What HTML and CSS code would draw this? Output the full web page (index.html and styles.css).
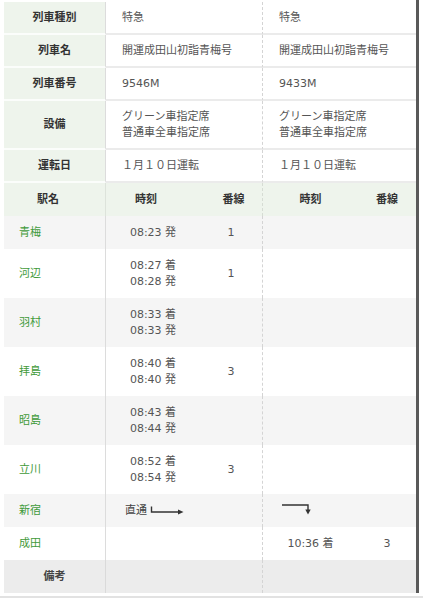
FILE: index.html
```html
<!DOCTYPE html>
<html lang="ja">
<head>
<meta charset="utf-8">
<title>列車時刻</title>
<link rel="stylesheet" href="styles.css">
</head>
<body>
<div class="page">
  <div class="frame">
    <div class="row info first">
      <div class="cell lab">列車種別</div>
      <div class="cell val v1">特急</div>
      <div class="cell val">特急</div>
    </div>
    <div class="row info">
      <div class="cell lab">列車名</div>
      <div class="cell val v1">開運成田山初詣青梅号</div>
      <div class="cell val">開運成田山初詣青梅号</div>
    </div>
    <div class="row info">
      <div class="cell lab">列車番号</div>
      <div class="cell val v1">9546M</div>
      <div class="cell val">9433M</div>
    </div>
    <div class="row info tall">
      <div class="cell lab">設備</div>
      <div class="cell val v1"><div>グリーン車指定席<br>普通車全車指定席</div></div>
      <div class="cell val"><div>グリーン車指定席<br>普通車全車指定席</div></div>
    </div>
    <div class="row info">
      <div class="cell lab">運転日</div>
      <div class="cell val v1">１月１０日運転</div>
      <div class="cell val">１月１０日運転</div>
    </div>

    <div class="row head">
      <div class="cell hname">駅名</div>
      <div class="cell hc ht1">時刻</div>
      <div class="cell hc hp1">番線</div>
      <div class="cell hc">時刻</div>
      <div class="cell hc">番線</div>
    </div>

    <div class="row st alt">
      <div class="cell sname">青梅</div>
      <div class="cell tm">08:23 発</div>
      <div class="cell pl p1">1</div>
      <div class="cell tm"></div>
      <div class="cell pl"></div>
    </div>
    <div class="row st tall">
      <div class="cell sname">河辺</div>
      <div class="cell tm"><div>08:27 着<br>08:28 発</div></div>
      <div class="cell pl p1">1</div>
      <div class="cell tm"></div>
      <div class="cell pl"></div>
    </div>
    <div class="row st tall alt">
      <div class="cell sname">羽村</div>
      <div class="cell tm"><div>08:33 着<br>08:33 発</div></div>
      <div class="cell pl p1"></div>
      <div class="cell tm"></div>
      <div class="cell pl"></div>
    </div>
    <div class="row st tall">
      <div class="cell sname">拝島</div>
      <div class="cell tm"><div>08:40 着<br>08:40 発</div></div>
      <div class="cell pl p1">3</div>
      <div class="cell tm"></div>
      <div class="cell pl"></div>
    </div>
    <div class="row st tall alt">
      <div class="cell sname">昭島</div>
      <div class="cell tm"><div>08:43 着<br>08:44 発</div></div>
      <div class="cell pl p1"></div>
      <div class="cell tm"></div>
      <div class="cell pl"></div>
    </div>
    <div class="row st tall">
      <div class="cell sname">立川</div>
      <div class="cell tm"><div>08:52 着<br>08:54 発</div></div>
      <div class="cell pl p1">3</div>
      <div class="cell tm"></div>
      <div class="cell pl"></div>
    </div>
    <div class="row st alt">
      <div class="cell sname">新宿</div>
      <div class="cell tm thru">直通<svg class="arr-r" width="34" height="10" viewBox="0 0 34 10"><path d="M1.5 1.5 V7 H29" fill="none" stroke="#333" stroke-width="1.4"/><polygon points="28,4.5 33.5,7 28,9.5" fill="#333"/></svg></div>
      <div class="cell pl p1"></div>
      <div class="cell tm thru2"><svg class="arr-d" width="30" height="12" viewBox="0 0 30 12"><path d="M0 2 H26 V7.5" fill="none" stroke="#333" stroke-width="1.4"/><polygon points="23.3,6.5 28.7,6.5 26,11.5" fill="#333"/></svg></div>
      <div class="cell pl"></div>
    </div>
    <div class="row st">
      <div class="cell sname">成田</div>
      <div class="cell tm"></div>
      <div class="cell pl p1"></div>
      <div class="cell tm">10:36 着</div>
      <div class="cell pl">3</div>
    </div>
    <div class="row note">
      <div class="cell nlab">備考</div>
      <div class="cell val v1"></div>
      <div class="cell val"></div>
    </div>
  </div>
</div>
<div class="foot"></div>
</body>
</html>
```

FILE: styles.css
```css
* {
  box-sizing: border-box;
  margin: 0;
  padding: 0;
}

html, body {
  background: #ffffff;
}

body {
  font-family: "DejaVu Sans", "Noto Sans CJK JP", sans-serif;
  font-size: 11px;
  line-height: 16px;
  color: #555555;
  width: 423px;
  height: 600px;
  overflow: hidden;
}

.page {
  padding-left: 4px;
}

.frame {
  width: 415px;
  border-right: 3px solid #595959;
}

.row {
  display: grid;
  grid-template-columns: 102px 94px 63px 95px 58px;
  height: 33px;
}

.row.tall {
  height: 49px;
}

.row.first {
  height: 35px;
  padding-top: 2px;
}

.cell {
  display: flex;
  align-items: center;
  min-width: 0;
  white-space: nowrap;
}

/* info section */
.lab {
  justify-content: center;
  font-weight: bold;
  color: #333333;
  background: #eef4ec;
  border-right: 1px solid #dcdcdc;
}

.val {
  grid-column: span 2;
  padding-left: 16px;
}

.val.v1 {
  border-right: 1px dashed #d4d4d4;
}

.info .cell {
  border-bottom: 2px solid #ebebeb;
}

.info .lab {
  border-bottom-color: #fbfdfb;
}

/* station header */
.head {
  background: #eef4ec;
  font-weight: bold;
  color: #333333;
}

.hname {
  padding-left: 33px;
  border-right: 1px solid #dde3db;
}

.hc {
  justify-content: center;
}

.ht1 {
  padding-right: 14px;
}

.hp1 {
  padding-left: 5px;
  border-right: 1px dashed #d6dcd4;
}

/* station rows */
.st {
  background: #ffffff;
}

.st.alt {
  background: #f5f5f5;
}

.sname {
  padding-left: 15px;
  color: #3f9a3a;
  border-right: 1px solid #dcdcdc;
}

.tm {
  justify-content: center;
}

.pl {
  justify-content: center;
}

.pl.p1 {
  border-right: 1px dashed #d4d4d4;
}

.thru {
  justify-content: flex-start;
  padding-left: 19px;
  color: #444444;
}

.arr-r {
  display: block;
  margin-left: 3px;
  margin-top: -2px;
}

.thru2 {
  justify-content: flex-start;
  padding-left: 19px;
}

.arr-d {
  display: block;
  margin-top: -4px;
}

/* note row */
.note {
  background: #ececec;
  height: 33px;
}

.nlab {
  justify-content: center;
  font-weight: bold;
  color: #444444;
  border-right: 1px solid #dadada;
}

.note .val {
  padding-left: 16px;
}

.foot {
  margin-top: 3px;
  height: 2px;
  background: #e2e2e2;
}
```
